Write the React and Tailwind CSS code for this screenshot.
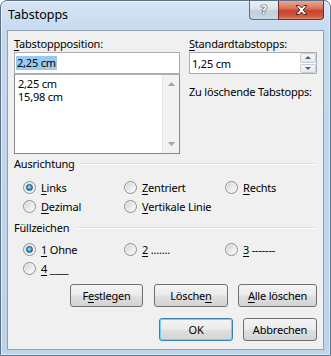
import React from "react";

function U({ children }) {
  return <span className="underline underline-offset-[2px] decoration-[1px]">{children}</span>;
}

function Radio({ checked, children }) {
  return (
    <div className="flex items-center h-[19px] gap-[5px]">
      <span className="w-[13px] h-[13px] shrink-0 rounded-full border border-[#8e8f8f] bg-[linear-gradient(135deg,#cfcfcf,#f3f3f3_70%,#fbfbfb)] shadow-[inset_0_0_0_1px_#f2f2f2] flex items-center justify-center">
        {checked && (
          <span className="w-[7px] h-[7px] rounded-full border border-[#1b4f78] bg-[radial-gradient(circle_at_45%_40%,#b8ecff,#3fa6e0_45%,#0d5a8e)]" />
        )}
      </span>
      <span className="leading-[15px] whitespace-nowrap">{children}</span>
    </div>
  );
}

function Btn({ className, children }) {
  return (
    <div
      className={
        "h-[23px] flex items-center justify-center rounded-[3px] border bg-[linear-gradient(#f3f3f3,#ececec_45%,#dfdfdf_55%,#d3d3d3)] leading-[15px] " +
        className
      }
    >
      {children}
    </div>
  );
}

function Arrow({ up, color }) {
  return (
    <svg width="7" height="4" viewBox="0 0 7 4">
      {up ? (
        <polygon points="3.5,0 7,4 0,4" fill={color} />
      ) : (
        <polygon points="0,0 7,0 3.5,4" fill={color} />
      )}
    </svg>
  );
}

function GroupLabel({ children }) {
  return (
    <div className="flex items-center gap-[6px] h-[15px]">
      <span className="leading-[15px]">{children}</span>
      <div className="flex-1 h-[2px] border-t border-t-[#d5dfe5] border-b border-b-white" />
    </div>
  );
}

export default function App() {
  return (
    <div className="w-[331px] h-[356px] bg-white font-['Noto_Sans',sans-serif] text-[11px] text-black tracking-[-0.2px]">
      <div className="w-full h-full flex flex-col rounded-t-[7px] border border-[#5d7288] bg-[linear-gradient(#d4e4f4,#c3d8ed_40px,#bcd3ea)] shadow-[inset_0_0_0_1px_rgba(255,255,255,0.55)]">
        {/* title bar */}
        <div className="h-[29px] flex items-start">
          <span className="ml-[7px] mt-[5px] text-[12.5px] leading-[18px] tracking-normal">Tabstopps</span>
          <div className="ml-auto mr-[6px] flex">
            <div className="w-[29px] h-[19px] rounded-bl-[4px] border border-t-0 border-r-0 border-[#5f6e7e] bg-[linear-gradient(#e9eff5,#d9e2ec_45%,#c3cfdc_55%,#cad7e4)] flex items-center justify-center">
              <span className="font-['DejaVu_Sans',sans-serif] font-bold text-[12px] leading-[12px] text-[#f7f9fb] [text-shadow:0_0_1px_#2d3540,0_0_1px_#2d3540,0_0_1px_#2d3540]">
                ?
              </span>
            </div>
            <div className="w-[46px] h-[19px] rounded-br-[4px] border border-t-0 border-[#6b2f26] bg-[linear-gradient(#e9a994,#d8745d_40%,#c7432b_55%,#cf5a3f_85%,#e08a70)] flex items-center justify-center">
              <svg width="13" height="10" viewBox="0 0 13 10">
                <polygon
                  points="1,0.5 4.2,0.5 6.5,3 8.8,0.5 12,0.5 8.2,5 12,9.5 8.8,9.5 6.5,7 4.2,9.5 1,9.5 4.8,5"
                  fill="#fdfdfd"
                  stroke="#4a2720"
                  strokeWidth="1"
                  strokeLinejoin="round"
                />
              </svg>
            </div>
          </div>
        </div>

        {/* content */}
        <div className="mx-[6px] mb-[5px] flex-1 border border-[#8fa1b3] bg-[#f0f0f0] px-[6px] pt-[5px]">
          <div className="flex">
            {/* left column */}
            <div className="w-[166px] flex flex-col">
              <div className="h-[15px] leading-[15px]">
                <U>T</U>abstoppposition:
              </div>
              <div className="mt-[1px] h-[22px] border border-[#abadb3] bg-white flex items-center pl-[1px]">
                <span className="bg-[#99c9ef] px-[1px] leading-[14px]">2,25 cm</span>
              </div>
              <div className="h-[80px] border border-[#828790] border-t-[#abadb3] bg-white flex">
                <div className="flex-1 pl-[3px] pt-[2px] leading-[13px]">
                  <div>2,25 cm</div>
                  <div>15,98 cm</div>
                </div>
                <div className="w-[17px] bg-[#f2f2f2] border-l border-l-[#e6e6e6] flex flex-col justify-between items-center py-[7px]">
                  <Arrow up color="#a3a3a3" />
                  <Arrow color="#a3a3a3" />
                </div>
              </div>
            </div>

            {/* right column */}
            <div className="ml-[9px] w-[128px] flex flex-col">
              <div className="h-[15px] leading-[15px]">
                <U>S</U>tandardtabstopps:
              </div>
              <div className="mt-[1px] h-[22px] border border-[#abadb3] bg-white flex items-center">
                <span className="pl-[2px] flex-1 leading-[15px]">1,25 cm</span>
                <div className="w-[16px] h-[20px] flex flex-col gap-px">
                  <div className="flex-1 border border-[#c5ccd6] rounded-[2px] bg-[linear-gradient(#f7f7f7,#e4e8ee)] flex items-center justify-center">
                    <svg width="6" height="3" viewBox="0 0 6 3">
                      <polygon points="3,0 6,3 0,3" fill="#4c6080" />
                    </svg>
                  </div>
                  <div className="flex-1 border border-[#c5ccd6] rounded-[2px] bg-[linear-gradient(#f7f7f7,#e4e8ee)] flex items-center justify-center">
                    <svg width="6" height="3" viewBox="0 0 6 3">
                      <polygon points="0,0 6,0 3,3" fill="#4c6080" />
                    </svg>
                  </div>
                </div>
              </div>
              <div className="mt-[10px] leading-[15px]">Zu löschende Tabstopps:</div>
            </div>
          </div>

          {/* Ausrichtung */}
          <div className="mt-[2px]">
            <GroupLabel>Ausrichtung</GroupLabel>
          </div>
          <div className="mt-[7px] ml-[9px] grid grid-cols-[101px_101px_1fr]">
            <Radio checked>
              <U>L</U>inks
            </Radio>
            <Radio>
              <U>Z</U>entriert
            </Radio>
            <Radio>
              <U>R</U>echts
            </Radio>
            <Radio>
              <U>D</U>ezimal
            </Radio>
            <Radio>
              <U>V</U>ertikale Linie
            </Radio>
          </div>

          {/* Füllzeichen */}
          <div className="mt-[4px]">
            <GroupLabel>Füllzeichen</GroupLabel>
          </div>
          <div className="mt-[5px] ml-[9px] grid grid-cols-[101px_101px_1fr]">
            <Radio checked>
              <U>1</U> Ohne
            </Radio>
            <Radio>
              <U>2</U> .......
            </Radio>
            <Radio>
              <U>3</U> -------
            </Radio>
            <Radio>
              <U>4</U> ____
            </Radio>
          </div>

          {/* buttons */}
          <div className="mt-[6px] flex justify-end">
            <Btn className="w-[73px] border-[#707070]">
              F<U>e</U>stlegen
            </Btn>
            <Btn className="ml-[11px] w-[74px] border-[#707070]">
              Lösche<U>n</U>
            </Btn>
            <Btn className="ml-[10px] w-[79px] border-[#707070]">
              <U>A</U>lle löschen
            </Btn>
          </div>
          <div className="mt-[11px] flex justify-end">
            <Btn className="w-[74px] border-[#3c7fb1] shadow-[inset_0_0_0_1px_#6fd6f7]">OK</Btn>
            <Btn className="ml-[10px] w-[74px] border-[#707070]">Abbrechen</Btn>
          </div>
        </div>
      </div>
    </div>
  );
}
